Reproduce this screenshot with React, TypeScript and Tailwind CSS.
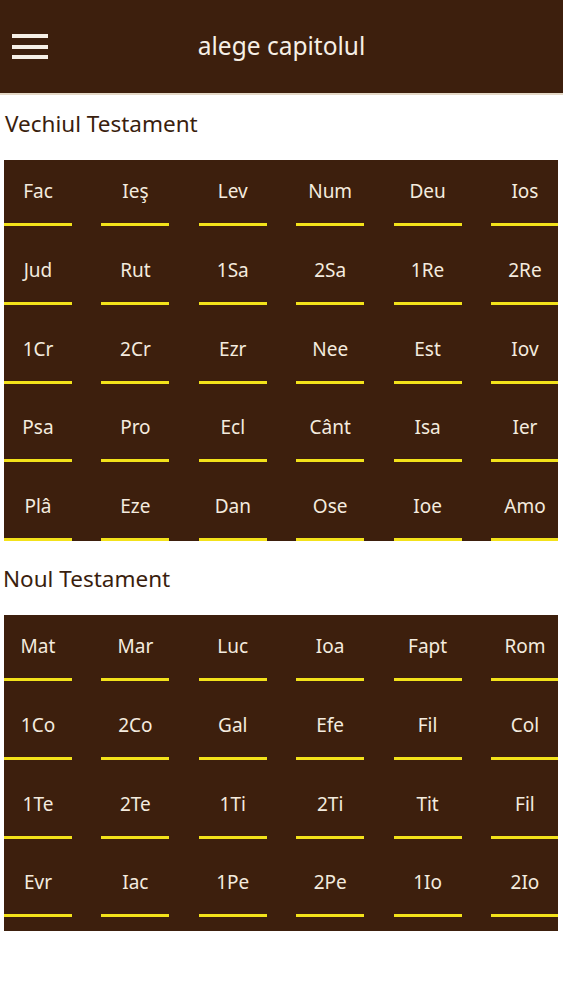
import React from 'react';

const oldTestament = [
  'Fac', 'Ieş', 'Lev', 'Num', 'Deu', 'Ios',
  'Jud', 'Rut', '1Sa', '2Sa', '1Re', '2Re',
  '1Cr', '2Cr', 'Ezr', 'Nee', 'Est', 'Iov',
  'Psa', 'Pro', 'Ecl', 'Cânt', 'Isa', 'Ier',
  'Plâ', 'Eze', 'Dan', 'Ose', 'Ioe', 'Amo',
];

const newTestament = [
  'Mat', 'Mar', 'Luc', 'Ioa', 'Fapt', 'Rom',
  '1Co', '2Co', 'Gal', 'Efe', 'Fil', 'Col',
  '1Te', '2Te', '1Ti', '2Ti', 'Tit', 'Fil',
  'Evr', 'Iac', '1Pe', '2Pe', '1Io', '2Io',
];

function BookGrid({ books, height }: { books: string[]; height: string }) {
  return (
    <div className={`mx-[4px] w-[554px] overflow-hidden bg-[#3d1f0d] ${height}`}>
      <div className="-mt-[12.75px] grid grid-cols-[repeat(6,68px)] gap-x-[29.4px]">
        {books.map((b, i) => (
          <div key={i} className="flex h-[78.75px] flex-col items-center justify-end">
            <span className="text-[19px] leading-[26px] text-[#f4ebdf]">{b}</span>
            <div className="mt-[19px] h-[3px] w-[68px] bg-[#f3e21a]" />
          </div>
        ))}
      </div>
    </div>
  );
}

export default function App() {
  return (
    <div className="min-h-[1000px] w-[563px] bg-white font-['Noto_Sans',sans-serif]">
      {/* Header */}
      <div className="relative flex h-[95px] items-center justify-center border-b-2 border-[#e4d8c6] bg-[#3d1f0d] pb-[2px]">
        <button className="absolute left-[12px] top-[34px] flex w-[36px] flex-col gap-[6.5px]">
          <span className="h-[4px] w-full bg-[#f6efe6]" />
          <span className="h-[4px] w-full bg-[#f6efe6]" />
          <span className="h-[4px] w-full bg-[#f6efe6]" />
        </button>
        <h1 className="text-[24.5px] leading-[30px] text-[#f6efe6]">alege capitolul</h1>
      </div>

      {/* Old testament */}
      <div className="pb-[22px] pl-[5px] pt-[15px] text-[22.5px] leading-[28px] text-[#3a1e0e]">Vechiul Testament</div>
      <BookGrid books={oldTestament} height="h-[381px]" />

      {/* New testament */}
      <div className="pb-[22px] pl-[3px] pt-[24px] text-[22.5px] leading-[28px] text-[#3a1e0e]">Noul Testament</div>
      <BookGrid books={newTestament} height="h-[316px]" />
    </div>
  );
}
